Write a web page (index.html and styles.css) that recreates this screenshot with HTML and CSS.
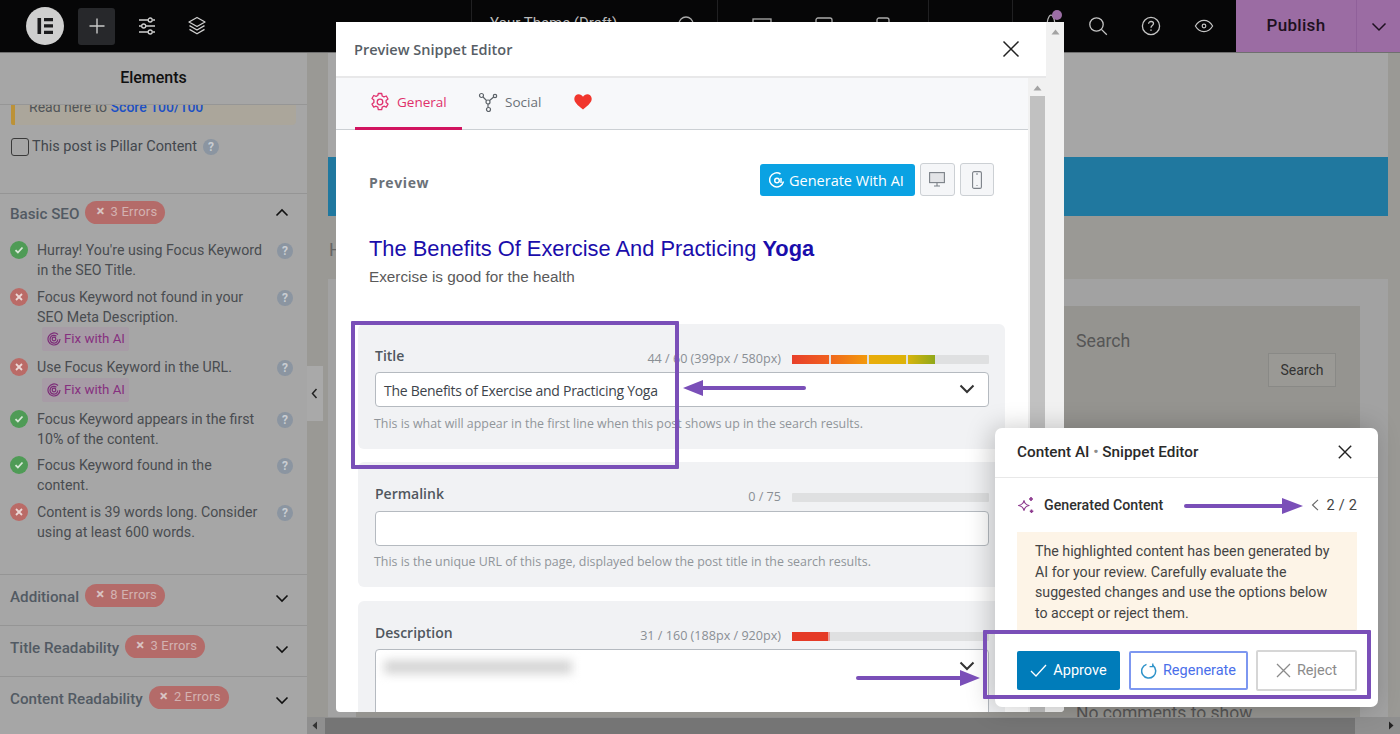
FILE: index.html
```html
<!DOCTYPE html>
<html lang="en">
<head>
<meta charset="utf-8">
<title>Preview Snippet Editor</title>
<link rel="stylesheet" href="styles.css">
</head>
<body>
<div class="app">
  <header class="topbar">
    <div class="top-left">
      <span class="logo"><svg width="38" height="38" viewBox="0 0 38 38"><circle cx="19" cy="19" r="19" fill="#cfcfcf"/><path d="M11.5 11h3.600v16h-3.600zM18 11h9v3.300h-9zM18 17.300h9v3.300h-9zM18 23.700h9V27h-9z" fill="#1b1b1d"/></svg></span>
      <span class="plus"><svg width="18" height="18" viewBox="0 0 18 18"><path d="M9 1.500v15M1.500 9h15" stroke="#c9c9c9" stroke-width="1.400" fill="none"/></svg></span>
      <span class="ticon"><svg width="20" height="20" viewBox="0 0 20 20" fill="none" stroke="#cfcfcf" stroke-width="1.300"><path d="M2 4h9M15.500 4H18M2 10h2.500M9 10h9M2 16h9M15.500 16H18"/><circle cx="13.200" cy="4" r="2"/><circle cx="6.700" cy="10" r="2"/><circle cx="13.200" cy="16" r="2"/></svg></span>
      <span class="ticon"><svg width="20" height="20" viewBox="0 0 20 20" fill="none" stroke="#cfcfcf" stroke-width="1.300" stroke-linejoin="round"><path d="M10 1.500l8 4.500-8 4.500L2 6z"/><path d="M2.500 9.600L10 14l7.500-4.400M2.500 13.400L10 17.800l7.500-4.400"/></svg></span>
    </div>
    <div class="top-mid">
      <span class="tab-name">Your Theme (Draft)<svg class="gear-top" width="20" height="20" viewBox="0 0 20 20"><circle cx="10" cy="10" r="7" fill="none" stroke="#aaa" stroke-width="1.300"/></svg></span>
      <span class="devices"><svg width="20" height="20" viewBox="0 0 20 20"><rect x="1" y="3" width="18" height="13" fill="none" stroke="#aaa" stroke-width="1.300"/></svg><svg width="18" height="20" viewBox="0 0 18 20"><rect x="1" y="2" width="16" height="16" rx="2" fill="none" stroke="#aaa" stroke-width="1.300"/></svg><svg width="14" height="20" viewBox="0 0 14 20"><rect x="1" y="2" width="12" height="16" rx="2" fill="none" stroke="#aaa" stroke-width="1.300"/></svg></span>
      <span class="top-cell"></span>
    </div>
    <div class="top-right">
      <span class="ticon bell"><svg class="bell-art" width="12" height="16" viewBox="0 0 12 16" fill="none" stroke="#b5b5b5" stroke-width="1.200"><path d="M1 15c1.500-2 1-5 2-8s2-4 3-4 2 1 3 4 .5 6 2 8"/></svg><i class="dot"></i></span>
      <span class="ticon"><svg width="20" height="20" viewBox="0 0 20 20" fill="none" stroke="#c4c4c4" stroke-width="1.300"><circle cx="8.500" cy="8.500" r="6.700"/><path d="M13.400 13.400l5.400 5.400"/></svg></span>
      <span class="ticon"><svg width="20" height="20" viewBox="0 0 20 20" fill="none" stroke="#c4c4c4" stroke-width="1.300"><circle cx="10" cy="10" r="8.600"/><path d="M7.600 7.800c0-1.400 1.100-2.300 2.500-2.300s2.400.9 2.400 2.100c0 1.900-2.500 2-2.500 4.100"/><path d="M10 13.400v1.300" stroke-width="1.500"/></svg></span>
      <span class="ticon"><svg width="22" height="20" viewBox="0 0 22 20" fill="none" stroke="#c4c4c4" stroke-width="1.300"><path d="M1.500 10C4 5.800 7.300 3.800 11 3.800s7 2 9.500 6.200c-2.500 4.200-5.800 6.200-9.500 6.200S4 14.200 1.500 10z"/><circle cx="11" cy="10" r="2"/></svg></span>
    </div>
    <div class="publish">
      <span class="publish-label">Publish</span>
      <span class="publish-more"><svg width="16" height="10" viewBox="0 0 16 10" fill="none" stroke="#1e1020" stroke-width="1.500"><path d="M1.500 1.500L8 8l6.500-6.500"/></svg></span>
    </div>
  </header>

  <div class="main">
    <aside class="sidebar">
      <h2 class="side-title">Elements</h2>
      <div class="side-scroll">
        <div class="notice"><span>Read here to <a class="link">Score 100/100</a></span></div>
        <div class="pillar"><i class="checkbox"></i><span>This post is Pillar Content</span><i class="q q-near">?</i></div>

        <section class="seo-sec seo-basic">
          <div class="seo-head"><span class="seo-name">Basic SEO</span><span class="badge"><b>×</b>3 Errors</span><svg class="chev" width="14" height="9" viewBox="0 0 14 9" fill="none" stroke="#111" stroke-width="1.600"><path d="M1.500 7.500L7 2l5.500 5.500"/></svg></div>
          <ul class="checks">
            <li class="check"><i class="st ok"><svg width="10" height="10" viewBox="0 0 10 10" fill="none" stroke="#d8e8d8" stroke-width="1.800"><path d="M1.500 5.200l2.400 2.300 4.600-5"/></svg></i><span class="ctext">Hurray! You're using Focus Keyword in the SEO Title.</span><i class="q">?</i></li>
            <li class="check"><i class="st bad"><svg width="10" height="10" viewBox="0 0 10 10" fill="none" stroke="#ecd8d6" stroke-width="1.800"><path d="M2 2l6 6M8 2l-6 6"/></svg></i><div class="ctext">Focus Keyword not found in your SEO Meta Description.<span class="fix"><svg width="14" height="14" viewBox="0 0 14 14" fill="none" stroke="#7c2c78" stroke-width="1.200"><path d="M13 7a6 6 0 1 1-2-4.500"/><path d="M10.800 7.500a3.900 3.900 0 1 1-1.400-3.300"/><circle cx="7" cy="7" r="1.800"/></svg>Fix with AI</span></div><i class="q">?</i></li>
            <li class="check up1"><i class="st bad"><svg width="10" height="10" viewBox="0 0 10 10" fill="none" stroke="#ecd8d6" stroke-width="1.800"><path d="M2 2l6 6M8 2l-6 6"/></svg></i><div class="ctext">Use Focus Keyword in the URL.<span class="fix fix-low"><svg width="14" height="14" viewBox="0 0 14 14" fill="none" stroke="#7c2c78" stroke-width="1.200"><path d="M13 7a6 6 0 1 1-2-4.500"/><path d="M10.800 7.500a3.900 3.900 0 1 1-1.400-3.300"/><circle cx="7" cy="7" r="1.800"/></svg>Fix with AI</span></div><i class="q">?</i></li>
            <li class="check"><i class="st ok"><svg width="10" height="10" viewBox="0 0 10 10" fill="none" stroke="#d8e8d8" stroke-width="1.800"><path d="M1.500 5.200l2.400 2.300 4.600-5"/></svg></i><span class="ctext">Focus Keyword appears in the first 10% of the content.</span><i class="q">?</i></li>
            <li class="check up2"><i class="st ok"><svg width="10" height="10" viewBox="0 0 10 10" fill="none" stroke="#d8e8d8" stroke-width="1.800"><path d="M1.500 5.200l2.400 2.300 4.600-5"/></svg></i><span class="ctext">Focus Keyword found in the content.</span><i class="q">?</i></li>
            <li class="check"><i class="st bad"><svg width="10" height="10" viewBox="0 0 10 10" fill="none" stroke="#ecd8d6" stroke-width="1.800"><path d="M2 2l6 6M8 2l-6 6"/></svg></i><span class="ctext">Content is 39 words long. Consider using at least 600 words.</span><i class="q">?</i></li>
          </ul>
        </section>
        <section class="seo-sec">
          <div class="seo-head"><span class="seo-name">Additional</span><span class="badge"><b>×</b>8 Errors</span><svg class="chev" width="14" height="9" viewBox="0 0 14 9" fill="none" stroke="#111" stroke-width="1.600"><path d="M1.500 1.500L7 7l5.500-5.500"/></svg></div>
        </section>
        <section class="seo-sec">
          <div class="seo-head"><span class="seo-name">Title Readability</span><span class="badge"><b>×</b>3 Errors</span><svg class="chev" width="14" height="9" viewBox="0 0 14 9" fill="none" stroke="#111" stroke-width="1.600"><path d="M1.500 1.500L7 7l5.500-5.500"/></svg></div>
        </section>
        <section class="seo-sec">
          <div class="seo-head"><span class="seo-name">Content Readability</span><span class="badge"><b>×</b>2 Errors</span><svg class="chev" width="14" height="9" viewBox="0 0 14 9" fill="none" stroke="#111" stroke-width="1.600"><path d="M1.500 1.500L7 7l5.500-5.500"/></svg></div>
        </section>
      </div>
      <span class="side-toggle"><svg width="7" height="11" viewBox="0 0 7 11" fill="none" stroke="#222" stroke-width="1.500"><path d="M5.500 1L1.500 5.500l4 4.500"/></svg></span>
    </aside>

    <div class="canvas">
      <div class="page">
        <div class="hero"></div>
        <div class="band"></div>
        <div class="crumb">H</div>
        <div class="widgets">
          <div class="widgets-inner">
            <div class="widget-col">
              <div class="w-title">Search</div>
              <div class="w-btn-row"><span class="w-btn">Search</span></div>
              <div class="w-comments">No comments to show</div>
            </div>
          </div>
        </div>
      </div>
      <div class="hscroll">
        <svg width="6" height="9" viewBox="0 0 6 9"><path d="M5 .5v8L.5 4.500z" fill="#333"/></svg>
        <span class="hthumb"></span>
        <svg width="6" height="9" viewBox="0 0 6 9"><path d="M1 .5v8l4.500-4z" fill="#222"/></svg>
      </div>
    </div>
  </div>

  <div class="modal">
    <div class="modal-left">
      <div class="modal-head">
        <span class="modal-title">Preview Snippet Editor</span>
        <svg width="18" height="18" viewBox="0 0 18 18" fill="none" stroke="#222" stroke-width="1.500"><path d="M1.500 1.500l15 15M16.500 1.500l-15 15"/></svg>
      </div>
      <div class="modal-body">
        <div class="modal-main">
          <nav class="tabs">
            <span class="tab active"><svg width="20" height="20" viewBox="0 0 20 20" fill="none" stroke="#e0336f" stroke-width="1.300" stroke-linejoin="round"><path d="M8.300 1.500h3.400l.5 2.500 1.700.9 2.400-.9 1.700 3-1.900 1.600v1.900l1.900 1.600-1.700 3-2.400-.9-1.700.9-.5 2.500H8.300l-.5-2.500-1.700-.9-2.400.9-1.700-3 1.900-1.600V8.100L2 6.500l1.700-3 2.400.9 1.700-.9z"/><circle cx="10" cy="10" r="2.800"/></svg>General</span>
            <span class="tab"><svg width="20" height="20" viewBox="0 0 20 20" fill="none" stroke="#5c6268" stroke-width="1.200"><circle cx="3.500" cy="3.500" r="2"/><circle cx="17" cy="4" r="1.700"/><circle cx="10" cy="10" r="2"/><circle cx="10.500" cy="17.500" r="2"/><path d="M5 5l3.500 3.500M15.700 5l-4.400 3.800M10 12v3.500"/></svg>Social</span>
            <span class="tab tab-heart"><svg width="18" height="16" viewBox="0 0 18 16"><path d="M9 15.500C3 11 .3 8 .3 4.800.3 2.200 2.300.3 4.700.3 6.400.3 8 1.200 9 2.800 10 1.200 11.600.3 13.300.3c2.400 0 4.400 1.900 4.400 4.500C17.700 8 15 11 9 15.500z" fill="#f1362d"/></svg></span>
          </nav>
          <div class="content">
            <div class="preview-row">
              <span class="preview-label">Preview</span>
              <span class="gen-btn"><svg width="16" height="18" viewBox="0 0 16 18" fill="none" stroke="#fff" stroke-width="1.500"><path d="M14.500 10.500A7 7 0 1 1 11.500 3"/><circle cx="8" cy="9.500" r="2.300"/><path d="M12 7v5"/></svg>Generate With AI</span>
              <span class="dev-btn"><svg width="16" height="15" viewBox="0 0 16 15" fill="none" stroke="#7b8087" stroke-width="1.100"><rect x=".6" y=".6" width="14.800" height="10" fill="#9aa0a6" fill-opacity=".2"/><path d="M8 10.600v3M5 14h6"/></svg></span>
              <span class="dev-btn"><svg width="10" height="18" viewBox="0 0 10 18" fill="none" stroke="#7b8087" stroke-width="1.100"><rect x=".6" y=".6" width="8.800" height="16.800" rx="1.500"/><path d="M4 3h2M4.500 14.500h1"/></svg></span>
            </div>
            <div class="serp-title">The Benefits Of Exercise And Practicing <b>Yoga</b></div>
            <div class="serp-desc">Exercise is good for the health</div>

            <div class="card">
              <div class="card-top"><label class="f-label">Title</label><span class="count">44 / 60 (399px / 580px)</span>
                <span class="bar"><i class="seg s1"></i><i class="seg s2"></i><i class="seg s3"></i><i class="seg s4"></i></span></div>
              <div class="input">The Benefits of Exercise and Practicing Yoga<svg class="in-chev" width="16" height="10" viewBox="0 0 16 10" fill="none" stroke="#333" stroke-width="2"><path d="M1.500 1.500L8 8l6.500-6.500"/></svg></div>
              <p class="help">This is what will appear in the first line when this post shows up in the search results.</p>
            </div>
            <div class="card card-perm">
              <div class="card-top"><label class="f-label">Permalink</label><span class="count">0 / 75</span><span class="bar"></span></div>
              <div class="input"></div>
              <p class="help">This is the unique URL of this page, displayed below the post title in the search results.</p>
            </div>
            <div class="card">
              <div class="card-top"><label class="f-label">Description</label><span class="count">31 / 160 (188px / 920px)</span>
                <span class="bar"><i class="seg s5"></i></span></div>
              <div class="input input-tall"><span class="blurred"></span><svg class="in-chev chev-top" width="16" height="10" viewBox="0 0 16 10" fill="none" stroke="#333" stroke-width="2"><path d="M1.500 1.500L8 8l6.500-6.500"/></svg></div>
            </div>
          </div>
        </div>
        <div class="vscroll">
          <svg width="9" height="6" viewBox="0 0 9 6"><path d="M.5 5.500h8L4.500.5z" fill="#a3a3a3"/></svg>
          <span class="vthumb"></span>
        </div>
      </div>
    </div>
    <div class="vscroll outer">
      <svg width="9" height="6" viewBox="0 0 9 6"><path d="M.5 5.500h8L4.500.5z" fill="#a3a3a3"/></svg>
    </div>
  </div>

  <div class="popup">
    <div class="pop-head">
      <span class="pop-title">Content AI <em>•</em> Snippet Editor</span>
      <svg width="14" height="14" viewBox="0 0 14 14" fill="none" stroke="#222" stroke-width="1.400"><path d="M.8.800l12.400 12.400M13.200.800L.8 13.200"/></svg>
    </div>
    <div class="pop-body">
      <div class="gen-row">
        <svg width="18" height="18" viewBox="0 0 18 18" fill="none" stroke="#8d3a8e" stroke-width="1.200" stroke-linejoin="round"><path d="M7 4.500c.6 3 1.800 4.300 5 5-3.200.7-4.400 2-5 5-.6-3-1.800-4.300-5.500-5C5.200 8.800 6.400 7.500 7 4.500z"/><path d="M14 1v4M12 3h4M14.500 13.500v3.500M12.800 15.200h3.500" stroke-width="1.600"/></svg>
        <span class="gen-label">Generated Content</span>
        <span class="pager"><svg width="8" height="12" viewBox="0 0 8 12" fill="none" stroke="#666" stroke-width="1.100"><path d="M7 .8L1.500 6 7 11.200"/></svg><span>2 / 2</span></span>
      </div>
      <div class="pop-note">The highlighted content has been generated by AI for your review. Carefully evaluate the suggested changes and use the options below to accept or reject them.</div>
      <div class="pop-actions">
        <span class="act approve"><svg width="17" height="13" viewBox="0 0 17 13" fill="none" stroke="#fff" stroke-width="1.300"><path d="M1 7l5 5L16 1"/></svg>Approve</span>
        <span class="act regen"><svg width="16" height="16" viewBox="0 0 16 16" fill="none" stroke="#2e93c9" stroke-width="1.500"><path d="M11.500 2.200A7 7 0 1 1 5.500 1.400"/><path d="M11.800 .4v3.200H8.600" stroke-width="1.300"/></svg>Regenerate</span>
        <span class="act reject"><svg width="15" height="15" viewBox="0 0 15 15" fill="none" stroke="#8b8b8b" stroke-width="1.300"><path d="M1 1l13 13M14 1L1 14"/></svg>Reject</span>
      </div>
    </div>
  </div>

  <div class="mark mark-title"></div>
  <div class="mark mark-actions"></div>
  <svg class="arrow arrow-left" width="124" height="18" viewBox="0 0 124 18"><path d="M20 9h101" stroke="#7a4fb8" stroke-width="4" stroke-linecap="round"/><path d="M0 9l20-8v16z" fill="#7a4fb8"/></svg>
  <svg class="arrow arrow-top" width="119" height="18" viewBox="0 0 119 18"><path d="M2 9h98" stroke="#7a4fb8" stroke-width="4" stroke-linecap="round"/><path d="M119 9L98 1v16z" fill="#7a4fb8"/></svg>
  <svg class="arrow arrow-bottom" width="124" height="18" viewBox="0 0 124 18"><path d="M2 9h104" stroke="#7a4fb8" stroke-width="4" stroke-linecap="round"/><path d="M124 9l-20-8v16z" fill="#7a4fb8"/></svg>
</div>
</body>
</html>
```
FILE: styles.css
```css
* { box-sizing: border-box; }
html, body { margin: 0; height: 100%; overflow: hidden; }
body { font-family: Roboto, "Liberation Sans", sans-serif; background: #9a9995; }
ul { list-style: none; margin: 0; padding: 0; }
p, h2 { margin: 0; }
i, em { font-style: normal; }

.app { position: relative; width: 1400px; height: 734px; display: flex; flex-direction: column; overflow: hidden; }

/* top bar */
.topbar { flex: 0 0 53px; background: #060607; border-bottom: 1px solid #6f6f6f; display: flex; }
.top-left { width: 471px; display: flex; align-items: center; padding-left: 26px; }
.logo { width: 38px; height: 38px; display: flex; }
.plus { width: 37px; height: 37px; margin-left: 14px; background: #27282b; border-radius: 3px; display: flex; align-items: center; justify-content: center; }
.ticon { width: 20px; height: 20px; display: flex; margin-left: 22px; }
.plus + .ticon { margin-left: 22px; }
.top-left .ticon + .ticon { margin-left: 30px; }
.top-mid { width: 541px; display: flex; }
.tab-name { width: 246px; border-left: 1px solid #202022; padding: 14px 0 0 18px; color: #bbb; font-size: 15px; display: flex; gap: 59px; white-space: nowrap; }
.gear-top { flex: none; }
.devices { width: 212px; border-left: 1px solid #202022; border-right: 1px solid #202022; display: flex; align-items: center; gap: 43px; padding-left: 34px; }
.top-cell { flex: 1; }
.top-right { width: 224px; display: flex; align-items: center; border-left: 1px solid #202022; padding-left: 75px; }
.top-right .ticon { margin-left: 0; margin-right: 33px; }
.top-right .bell { position: relative; width: 0; margin-right: 0; }
.bell-art { position: absolute; left: -43px; top: -4px; flex: none; }
.dot { position: absolute; left: -36px; top: -6px; width: 10px; height: 10px; border-radius: 50%; background: #9b6ea5; }
.publish { width: 164px; background: #9b6ca3; display: flex; align-items: center; }
.publish-label { width: 120px; text-align: center; font-size: 17px; font-weight: 500; color: #1e1020; letter-spacing: .3px; padding-bottom: 2px; }
.publish-more { flex: 1; align-self: stretch; border-left: 1px solid #90609a; display: flex; align-items: center; justify-content: center; padding-top: 2px; }

.main { flex: 1; display: flex; min-height: 0; }

/* sidebar */
.sidebar { width: 307px; background: #a6a6a6; display: flex; flex-direction: column; position: relative; }
.side-title { height: 52px; border-bottom: 1px solid #969696; font-size: 16px; font-weight: 500; line-height: 50px; text-align: center; color: #111; flex: none; }
.side-scroll { flex: 1; overflow: hidden; }
.notice { height: 20px; margin: 0 11px 0 11px; background: #aba69b; border-left: 4px solid #bc9238; border-radius: 0 0 4px 2px; overflow: hidden; font-size: 14px; color: #4f5459; padding-left: 14px; }
.notice span { display: block; margin-top: -8px; line-height: 20px; }
.link { color: #1d50c4; font-weight: 500; }
.pillar { display: flex; align-items: center; margin: 12px 0 0 11px; height: 19px; font-size: 14.500px; color: #42474d; }
.checkbox { width: 18px; height: 18px; border: 1px solid #3a3a3a; border-radius: 3px; margin-right: 3px; flex: none; }
.q { width: 16px; height: 16px; border-radius: 50%; background: #8b95a1; color: #c9cdd2; font-weight: 700; font-size: 12px; line-height: 16px; text-align: center; flex: none; }
.q-near { margin-left: 6px; }
.seo-sec { border-top: 1px solid #959595; padding-bottom: 6px; }
.pillar + .seo-sec { margin-top: 37px; }
.seo-head { height: 44px; display: flex; align-items: center; padding-left: 10px; position: relative; }
.seo-basic .seo-head { height: 40px; margin-bottom: 6px; }
.seo-basic { padding-bottom: 32px; }
.seo-name { font-size: 15.200px; font-weight: 500; color: #525a63; }
.badge { height: 23px; margin: -3px 0 0 6px; padding: 0 8px 0 11px; background: #b46b69; border-radius: 12px; color: #d3b2b1; font-size: 13px; line-height: 21px; display: flex; gap: 6px; letter-spacing: .2px; }
.badge b { font-size: 15px; font-weight: 700; color: #d8c4c3; }
.chev { position: absolute; right: 18px; top: 50%; margin-top: -3px; }
.seo-basic .chev { margin-top: -6px; }
.checks { display: flex; flex-direction: column; gap: 7px; padding: 0 14px 0 10px; }
.check { display: flex; font-size: 14.200px; line-height: 20px; color: #494c50; }
.up1 { margin-top: -1px; }
.up2 { margin-top: -1px; }
.st { width: 18px; height: 18px; border-radius: 50%; display: flex; align-items: center; justify-content: center; margin-top: 1px; flex: none; }
.ok { background: #4f9b56; }
.bad { background: #ba6b67; }
.ctext { flex: none; width: 237px; padding-left: 9px; }
.check .q { margin-top: 3px; margin-left: 12px; }
.fix { display: flex; align-items: center; gap: 3px; width: 87px; height: 24px; margin-left: 5px; padding-left: 5px; background: #a79ca6; color: #862f7f; border-radius: 2px; font-size: 13.300px; }
.fix-low { margin-top: 1px; }
.side-toggle { position: absolute; left: 307px; top: 313px; width: 16px; height: 55px; background: #a9a9a9; display: flex; align-items: center; justify-content: center; padding-right: 2px; z-index: 1; }

/* canvas */
.canvas { flex: 1; display: flex; flex-direction: column; min-width: 0; }
.page { flex: 1; margin: 0 12px 0 21px; display: flex; flex-direction: column; min-height: 0; overflow: hidden; }
.hero { height: 104px; background: #a6a6a6; flex: none; }
.band { height: 59px; background: #20789f; flex: none; }
.crumb { height: 63px; flex: none; font-size: 18px; color: #666; line-height: 68px; padding-left: 1px; }
.widgets { flex: 1; background: #a2a2a2; padding: 27px 28px 0 28px; min-height: 0; overflow: hidden; }
.widgets-inner { background: #959490; height: 100%; display: flex; justify-content: flex-end; overflow: hidden; }
.widget-col { width: 284px; padding-top: 22px; }
.w-title { font-size: 17.700px; line-height: 26px; color: #565656; }
.w-btn-row { display: flex; justify-content: flex-end; padding-right: 24px; margin-top: -1px; }
.w-btn { width: 68px; height: 34px; border: 1px solid #898986; background: #9a9995; font-size: 14px; line-height: 32px; text-align: center; color: #333; }
.w-comments { margin-top: 316px; font-size: 17.500px; color: #555; white-space: nowrap; }
.hscroll { flex: 0 0 17px; background: #8f8f8f; display: flex; align-items: center; gap: 0; padding: 0 6px 0 5px; }
.hscroll svg { flex: none; }
.hthumb { width: 1032px; height: 16px; margin: 0 33px 0 7px; background: #757575; }

/* modal */
.modal { position: absolute; left: 336px; top: 22px; width: 728px; height: 690px; display: flex; background: #fff; border-radius: 0 0 4px 4px; overflow: hidden; font-family: "Open Sans", "Liberation Sans", sans-serif; }
.modal-left { width: 710px; display: flex; flex-direction: column; }
.modal-head { height: 56px; flex: none; display: flex; align-items: center; justify-content: space-between; padding: 0 26px 0 18px; border-bottom: 2px solid #e8e8e9; }
.modal-title { font-size: 14.500px; font-weight: 600; color: #575e66; }
.modal-body { flex: 1; display: flex; min-height: 0; }
.modal-main { width: 692px; display: flex; flex-direction: column; min-height: 0; }
.tabs { height: 52px; flex: none; background: #f7f8fa; border-bottom: 1px solid #ccd0d4; padding-left: 19px; display: flex; }
.tab { display: flex; align-items: center; gap: 7px; font-size: 13.500px; color: #6b7178; height: 52px; margin-right: 33px; padding-bottom: 4px; }
.tab.active { width: 107px; color: #e0306a; padding: 0 0 1px 15px; border-bottom: 3px solid #d1135f; margin-right: 16px; }
.tab-heart { padding: 0 0 4px 0; }
.content { flex: 1; padding: 0 23px 0 22px; min-height: 0; overflow: hidden; }
.preview-row { display: flex; align-items: center; padding: 33px 11px 0 11px; height: 66px; }
.preview-label { flex: 1; font-size: 14px; font-weight: 700; color: #6b7178; letter-spacing: .6px; padding-top: 6px; }
.gen-btn { width: 155px; height: 32px; background: #0aa2e3; color: #fff; border-radius: 3px; font-size: 14.500px; display: flex; align-items: center; gap: 4px; padding-left: 9px; margin-top: 1px; white-space: nowrap; }
.dev-btn { width: 34.500px; height: 33px; border: 1px solid #ccd0d4; background: #f5f6f8; border-radius: 3px; display: flex; align-items: center; justify-content: center; margin-left: 5px; }
.serp-title { font-family: "Liberation Sans", Arial, sans-serif; font-size: 21.850px; line-height: 28px; color: #1a0dab; margin: 39px 0 0 11px; }
.serp-desc { font-family: "Liberation Sans", Arial, sans-serif; font-size: 15.300px; line-height: 20px; color: #5a5a5a; margin: 4px 0 0 11px; }
.card { background: #f1f2f4; border-radius: 6px; height: 125px; margin-bottom: 13px; padding: 0 16px 0 17px; }
.serp-desc + .card { margin-top: 37px; }
.card-perm { margin-bottom: 14px; }
.card-perm .card-top { height: 49px; }
.card-perm .help { margin-top: 8px; }
.card:last-child { height: 200px; }
.card-top { height: 48px; display: flex; align-items: center; padding-top: 15px; }
.f-label { font-size: 14px; font-weight: 600; color: #50575e; flex: 1; margin-top: -1px; }
.count { font-size: 12.600px; color: #8a8f94; margin-right: 11px; margin-top: 5px; }
.bar { width: 197px; height: 9px; background: #dfe0e1; display: flex; gap: 2px; margin-top: 7px; border-radius: 1px; }
.seg { height: 9px; display: block; }
.s1 { width: 37px; background: linear-gradient(90deg, #e8402a, #f0601f); }
.s2 { width: 36px; background: linear-gradient(90deg, #f0681c, #f29a0c); }
.s3 { width: 37px; background: linear-gradient(90deg, #eaac0a, #dcb30a); }
.s4 { width: 27px; background: linear-gradient(90deg, #d8b40c, #90a81a); }
.s5 { background: #e53a26; border-right: 2px solid #e9a09a; width: 38px; }
.input { position: relative; height: 35px; background: #fff; border: 1px solid #b5bac0; border-radius: 4px; font-size: 14px; letter-spacing: -.28px; line-height: 35px; color: #3d444b; padding-left: 8px; }
.input-tall { height: 120px; }
.in-chev { position: absolute; right: 13px; top: 11px; }
.chev-top { top: 11px; }
.blurred { position: absolute; left: 8px; top: 10px; width: 188px; height: 14px; background: #d6d6d6; filter: blur(5px); }
.help { font-size: 12.400px; line-height: 16px; color: #90959a; margin: 9px 0 0 -1px; }
.vscroll { width: 18px; background: #f1f1f1; display: flex; flex-direction: column; align-items: center; padding-top: 7px; flex: none; }
.vthumb { width: 15px; flex: 1; background: #c1c1c1; margin-top: 5px; }

/* popup */
.popup { position: absolute; left: 995px; top: 428px; width: 383px; height: 279px; background: #fff; border-radius: 7px; box-shadow: -4px 0 26px rgba(0,0,0,.22); display: flex; flex-direction: column; }
.pop-head { height: 50px; flex: none; border-bottom: 1px solid #e8e8e8; display: flex; align-items: center; justify-content: space-between; padding: 0 26px 2px 22px; }
.pop-title { font-size: 15.300px; font-weight: 500; color: #2a2a2a; }
.pop-title em { color: #8c8c8c; }
.pop-body { flex: 1; padding: 0 21px 0 22px; display: flex; flex-direction: column; }
.gen-row { height: 54px; flex: none; display: flex; align-items: center; gap: 9px; }
.gen-label { flex: 1; font-size: 14.200px; font-weight: 500; color: #2f2f2f; }
.pager { display: flex; align-items: center; gap: 8px; font-size: 14.500px; letter-spacing: .2px; color: #444; }
.pop-note { height: 98px; flex: none; background: #fdf4e7; padding: 9px 18px 0 18px; font-size: 14.200px; line-height: 20.700px; color: #444; }
.pop-actions { display: flex; align-items: center; margin-top: 20px; }
.act { height: 39px; display: flex; align-items: center; justify-content: center; gap: 6px; font-size: 14.500px; border-radius: 2px; }
.approve { width: 103px; background: #007cba; color: #fff; }
.regen { width: 119px; margin-left: 9px; border: 2px solid #7d97f0; color: #4a6fea; }
.reject { width: 101px; margin-left: 8px; height: 41px; border: 2px solid #d6d6d6; color: #8b8b8b; }

/* annotations */
.mark { position: absolute; border: 4px solid #7a4fb8; border-radius: 1px; pointer-events: none; }
.mark-title { left: 351px; top: 321px; width: 328px; height: 148px; }
.mark-actions { left: 983px; top: 630px; width: 388px; height: 69px; }
.arrow { position: absolute; pointer-events: none; }
.arrow-left { left: 683px; top: 379px; }
.arrow-top { left: 1184px; top: 497px; }
.arrow-bottom { left: 856px; top: 669px; }
```
